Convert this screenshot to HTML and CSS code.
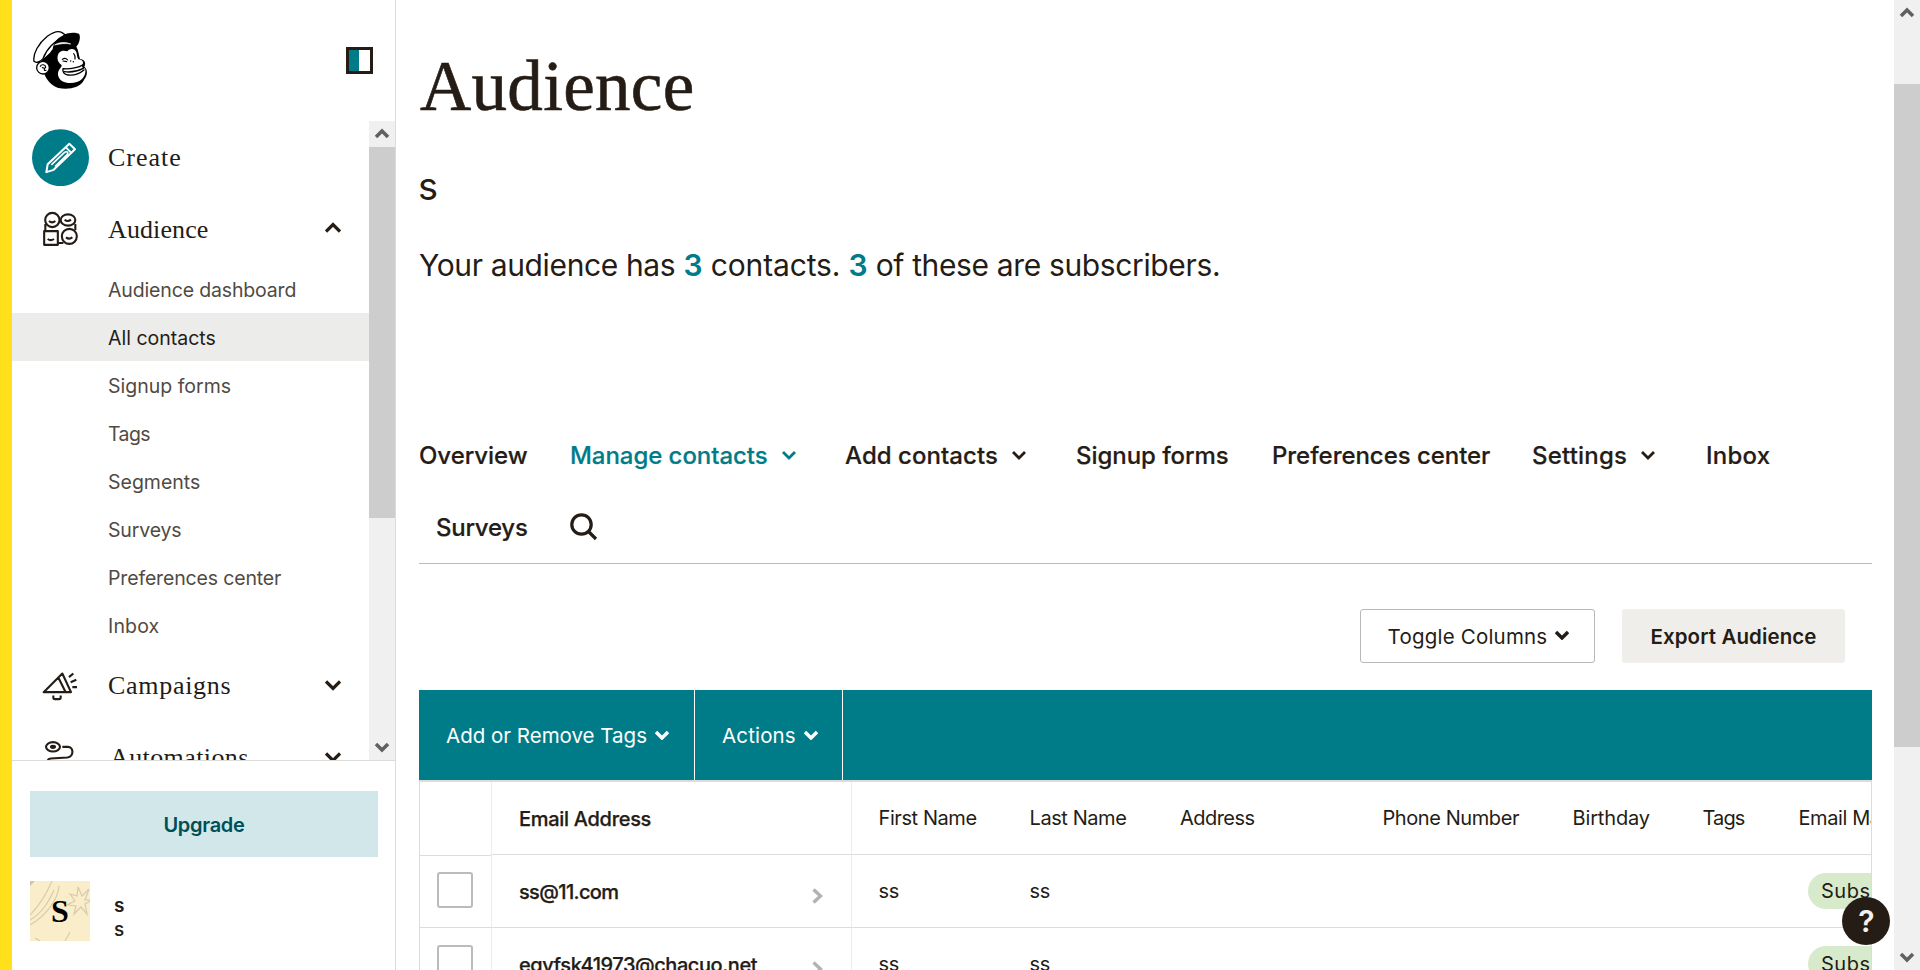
FILE: index.html
```html
<!DOCTYPE html>
<html lang="en">
<head>
<meta charset="utf-8">
<title>Audience</title>
<link rel="stylesheet" href="styles.css">
</head>
<body>
<div class="accent"></div>

<aside class="sidebar">
  <header class="brand">
    <svg class="logo" viewBox="96 90 168 180" role="img" aria-label="Mailchimp">
      <path d="M150 158C160 140 180 130 205 128L230 142C236 152 236 166 240 177C254 178 259 190 253 200C265 210 262 226 252 240C240 264 205 270 175 264C155 258 140 240 133 222L126 180Z" fill="#000"/>
      <path d="M173 168C176 152 190 150 202 154C210 143 226 145 229 157C232 166 231 174 235 178C245 179 252 184 248 193C244 199 246 205 254 205C260 214 254 230 245 238C232 251 205 252 190 245C175 238 170 222 177 210C181 203 187 199 184 194C175 189 171 178 173 168Z" fill="#fff"/>
      <path d="M190 206C212 208 238 202 249 194M189 206C187 216 192 224 204 225C222 227 240 220 252 210M193 215C212 218 232 214 250 205" fill="none" stroke="#000" stroke-width="4" stroke-linecap="round"/>
      <path d="M187 178C192 174 199 175 203 180M189 183L200 185M221 161C225 165 226 170 225 177" fill="none" stroke="#000" stroke-width="3.5" stroke-linecap="round"/>
      <circle cx="212" cy="183" r="2.200" fill="#000"/><circle cx="220" cy="185" r="2.200" fill="#000"/>
      <circle cx="129" cy="203" r="19" fill="#fff" stroke="#000" stroke-width="4"/>
      <path d="M121 199C124 192 136 193 137 201C137 205 132 204 133 209C133 212 136 212 138 211M127 203L132 204" fill="none" stroke="#000" stroke-width="3.5" stroke-linecap="round"/>
      <path d="M102 184C98 160 116 130 142 109C157 98 175 91 186 98L198 106C165 122 140 145 129 176C121 186 108 190 102 184Z" fill="#fff" stroke="#000" stroke-width="4"/>
      <path d="M186 108C200 97 230 96 238 103C243 115 236 136 226 143C212 137 184 137 158 148C160 130 172 114 186 108Z" fill="#000"/>
      <path d="M164 135C175 127 195 125 212 132C196 129 180 131 164 135Z" fill="#fff" stroke="#fff" stroke-width="2"/>
    </svg>
    <span class="collapse"></span>
  </header>

  <div class="nav-wrap">
    <nav class="nav">
      <a class="nav-main create">
        <svg class="nav-icon" viewBox="96 385.5 171 171">
          <circle cx="181.5" cy="471.5" r="85.5" fill="#007c89"/>
          <g fill="none" stroke="#fff" stroke-width="6" stroke-linejoin="round">
            <path d="M139 515L143 491L208 430L225 446L161 508Z"/>
            <path d="M197 440L214 457"/>
            <path d="M154 493L192 457Q200 451 203 456Q205 459 200 464L165 498" stroke-width="5"/>
          </g>
        </svg>
        <span class="label">Create</span>
      </a>
      <a class="nav-main audience">
        <svg class="nav-icon line" viewBox="96 603 171 171">
          <circle cx="157" cy="660" r="21.5"/>
          <ellipse cx="204" cy="660" rx="22" ry="17"/>
          <rect x="132.500" y="693.500" width="41" height="41"/>
          <circle cx="208" cy="709" r="22.500"/>
          <path d="M136 672V690M226 672V690M174 729H190M147 663Q156 671 166 663M194 659Q203 667 213 659M143 717Q152 724 162 717M198 712Q208 720 217 712"/>
        </svg>
        <span class="label">Audience</span>
        <svg class="caret up" viewBox="0 0 16 11"><path d="M1 9.500L8 2.500L15 9.500"/></svg>
      </a>
      <a class="nav-sub s1">Audience dashboard</a>
      <a class="nav-sub active">All contacts</a>
      <a class="nav-sub">Signup forms</a>
      <a class="nav-sub s4">Tags</a>
      <a class="nav-sub">Segments</a>
      <a class="nav-sub s1">Surveys</a>
      <a class="nav-sub s1">Preferences center</a>
      <a class="nav-sub s8">Inbox</a>
      <a class="nav-main campaigns">
        <svg class="nav-icon line" viewBox="96 469.5 171 171">
          <path d="M131 575L187 519L213 575ZM175 531L197 575M160 585V591Q160 596 165 596H177Q182 596 182 591V585M207 530L220 519M212 545L229 538M217 560H231"/>
        </svg>
        <span class="label">Campaigns</span>
        <svg class="caret" viewBox="0 0 16 11"><path d="M1 1.500L8 8.500L15 1.500"/></svg>
      </a>
      <a class="nav-main automations">
        <svg class="nav-icon line" viewBox="96 685.5 171 171">
          <ellipse cx="159" cy="739" rx="21" ry="14"/>
          <ellipse cx="159" cy="739" rx="6" ry="3"/>
          <path d="M187 739H204C221 739 223 768 202 771L152 774Q142 775 142 786"/>
        </svg>
        <span class="label">Automations</span>
        <svg class="caret" viewBox="0 0 16 11"><path d="M1 1.500L8 8.500L15 1.500"/></svg>
      </a>
    </nav>
    <div class="track">
      <svg class="arrow" viewBox="0 0 26 26"><path d="M7 16L13 10L19 16"/></svg>
      <div class="thumb nav-thumb"></div>
      <svg class="arrow end" viewBox="0 0 26 26"><path d="M7 10L13 16L19 10"/></svg>
    </div>
  </div>

  <footer class="account">
    <button class="upgrade">Upgrade</button>
    <div class="profile">
      <div class="avatar">
        <svg class="avatar-art" viewBox="0 0 60 60">
          <path d="M22 0C16 14 10 24 0 34M24 9C18 22 12 32 0 39M29 5C28 20 14 36 0 44M40 51L35 60M5 57L10 60M48 6L52 15L59 8L55 19H60M48 6L47 15L40 13L45 20L37 24L46 25L44 33L51 26L57 33L55 23L60 20"/>
          <path class="dot" d="M0 0H5L0 5Z"/>
        </svg>
        <span class="initial">S</span>
      </div>
      <div class="who"><span class="user">s</span><span>s</span></div>
    </div>
  </footer>
</aside>

<main class="main">
  <h1>Audience</h1>
  <h2>s</h2>
  <p class="lede"><span class="p1">Your audience has </span><b>3</b><span class="p2"> contacts. </span><b>3</b><span class="p3"> of these are subscribers.</span></p>

  <nav class="tabs">
    <a>Overview</a>
    <a class="on">Manage contacts<svg class="tick" viewBox="0 0 14 10"><path d="M1 2L7 8L13 2"/></svg></a>
    <a class="t3">Add contacts<svg class="tick" viewBox="0 0 14 10"><path d="M1 2L7 8L13 2"/></svg></a>
    <a>Signup forms</a>
    <a>Preferences center</a>
    <a class="t6">Settings<svg class="tick" viewBox="0 0 14 10"><path d="M1 2L7 8L13 2"/></svg></a>
    <a class="t7">Inbox</a>
    <a class="t8">Surveys</a>
    <a><svg class="search" viewBox="0 0 28 28"><circle cx="11.500" cy="11.500" r="9.700"/><path d="M18.500 18.500L26 26"/></svg></a>
  </nav>

  <div class="actions">
    <button class="toggle">Toggle Columns<svg class="tick" viewBox="0 0 14 10"><path d="M1 2L7 8L13 2"/></svg></button>
    <button class="export">Export Audience</button>
  </div>

  <div class="bulk">
    <a>Add or Remove Tags<svg class="tick" viewBox="0 0 14 10"><path d="M1 2L7 8L13 2"/></svg></a>
    <a class="b2">Actions<svg class="tick" viewBox="0 0 14 10"><path d="M1 2L7 8L13 2"/></svg></a>
  </div>

  <section class="table">
    <div class="row head">
      <div class="check"></div>
      <div class="email">Email Address</div>
      <div>First Name</div><div>Last Name</div><div class="h3">Address</div><div>Phone Number</div><div class="h5">Birthday</div><div class="h6">Tags</div><div class="h7">Email Marketing</div>
    </div>
    <div class="row">
      <div class="check"><span class="box"></span></div>
      <div class="email e1">ss@11.com<svg class="go" viewBox="0 0 11 16"><path d="M1.500 1.500L8.500 8L1.500 14.500"/></svg></div>
      <div>ss</div><div>ss</div><div></div><div></div><div></div><div></div><div class="status"><span class="pill">Subscribed</span></div>
    </div>
    <div class="row">
      <div class="check"><span class="box"></span></div>
      <div class="email e2">egvfsk41973@chacuo.net<svg class="go" viewBox="0 0 11 16"><path d="M1.500 1.500L8.500 8L1.500 14.500"/></svg></div>
      <div>ss</div><div>ss</div><div></div><div></div><div></div><div></div><div class="status"><span class="pill">Subscribed</span></div>
    </div>
  </section>
  <button class="help">?</button>
</main>

<div class="track page-track">
  <svg class="arrow" viewBox="0 0 26 26"><path d="M7 16L13 10L19 16"/></svg>
  <div class="thumb page-thumb"></div>
  <svg class="arrow end" viewBox="0 0 26 26"><path d="M7 10L13 16L19 10"/></svg>
</div>
</body>
</html>
```
FILE: styles.css
```css
* { box-sizing: border-box; }

body {
  margin: 0;
  height: 970px;
  display: flex;
  overflow: hidden;
  background: #fff;
  color: #241c15;
  font-family: Inter, "Liberation Sans", sans-serif;
}

button { border: 0; padding: 0; color: inherit; font-family: inherit; }
svg { flex: none; }

.accent { width: 12px; background: #ffe01b; }

/* Sidebar */
.sidebar {
  width: 384px;
  display: flex;
  flex-direction: column;
  border-right: 1px solid #dcdcdb;
}
.brand {
  height: 121px;
  padding: 30px 22px 0 20px;
  display: flex;
  justify-content: space-between;
}
.logo { width: 56px; height: 60px; }
.collapse {
  width: 27px;
  height: 27px;
  margin-top: 17px;
  border: 3px solid #241c15;
  background: linear-gradient(90deg, #007c89 10px, #fff 10px);
}
.nav-wrap { height: 639px; display: flex; overflow: hidden; }
.nav { flex: 1; }
.nav-main {
  height: 72px;
  padding: 0 28px 0 20px;
  display: flex;
  align-items: center;
  gap: 19px;
}
.nav-icon { width: 57px; height: 57px; }
.line {
  fill: none;
  stroke: #241c15;
  stroke-width: 6.3;
  stroke-linejoin: round;
}
.label {
  flex: 1;
  padding-top: 2px;
  font: 26px/72px "Liberation Serif", serif;
}
.create .label { letter-spacing: 1px; }
.audience .label { letter-spacing: .1px; }
.campaigns .label { letter-spacing: .7px; }
.automations .label { letter-spacing: .4px; padding-left: 2px; }
.caret { width: 16px; height: 11px; fill: none; stroke: #241c15; stroke-width: 3.2; }
.caret.up { margin-bottom: 3px; }
.nav-sub {
  display: block;
  height: 48px;
  padding-left: 96px;
  font-size: 19.5px;
  line-height: 51px;
  color: #504a44;
}
.nav-sub.active { background: #ececeb; color: #241c15; }
.nav-sub.s1 { letter-spacing: -.15px; }
.nav-sub.s4 { letter-spacing: -.6px; }
.nav-sub.s8 { letter-spacing: .15px; }

/* Scrollbars */
.track { width: 26px; background: #f0f0f0; display: flex; flex-direction: column; }
.arrow { width: 26px; height: 26px; fill: none; stroke: #606060; stroke-width: 3.5; }
.arrow.end { margin-top: auto; }
.thumb { background: #cdcdcd; }
.nav-thumb { height: 371px; }
.page-track { width: 26px; }
.page-thumb { height: 663px; margin-top: 58px; }

.account {
  flex: 1;
  padding: 30px 17px 0 18px;
  border-top: 1px solid #dcdcdb;
}
.upgrade {
  display: block;
  width: 348px;
  height: 66px;
  padding: 2px 0 0 0;
  background: #d1e7ea;
  color: #004e56;
  font-size: 20px;
  font-weight: 600;
  letter-spacing: -.3px;
}
.profile { display: flex; gap: 24px; margin-top: 24px; }
.avatar {
  position: relative;
  width: 60px;
  height: 60px;
  background: #faedca;
  display: flex;
  justify-content: center;
}
.avatar-art {
  position: absolute;
  inset: 0;
  fill: none;
  stroke: #d6ccab;
  stroke-width: 1.2;
}
.avatar-art .dot { fill: #cfc6a8; stroke: none; }
.initial {
  position: relative;
  font: bold 32px/60px "Liberation Serif", serif;
  color: #000;
}
.who {
  display: flex;
  flex-direction: column;
  padding-top: 13px;
  font-size: 19px;
  font-weight: 500;
  line-height: 24px;
}
.user { font-weight: 600; }

/* Main column */
.main {
  position: relative;
  flex: 1;
  min-width: 0;
  padding: 46px 22px 0 23px;
}
h1, h2, p { margin: 0; font-weight: 400; }
h1 {
  padding-left: 1px;
  font: 71px/80px "Liberation Serif", serif;
  letter-spacing: .3px;
  -webkit-text-stroke: .6px #241c15;
}
h2 { margin: 38px 0 0 -1px; font-size: 38px; line-height: 44px; }
.lede {
  margin-top: 37px;
  font-size: 30px;
  line-height: 40px;
  white-space: pre;
}
.lede b { font-weight: 600; color: #007c89; }
.p1, .p3 { letter-spacing: -.36px; }
.p2 { letter-spacing: -.15px; }

.tabs {
  display: grid;
  grid-template-columns: 151px 275px 231px 196px 260px 174px auto;
  grid-auto-rows: 72px;
  margin-top: 134px;
  border-bottom: 1px solid #bbb;
  height: 145px;
  font-size: 24px;
  font-weight: 500;
  letter-spacing: -.05px;
  -webkit-text-stroke: .2px currentColor;
}
.tabs a { display: flex; align-items: center; }
.tabs .on { color: #007c89; }
.tabs .t3 { letter-spacing: .05px; }
.tabs .t6 { letter-spacing: .2px; }
.tabs .t7 { letter-spacing: .25px; }
.tabs .t8 { padding-left: 17px; letter-spacing: -.25px; }
.tick { width: 14px; height: 10px; margin-left: 14px; fill: none; stroke: currentColor; stroke-width: 2.8; }
.search { width: 28px; height: 28px; fill: none; stroke: #241c15; stroke-width: 3.2; }

.actions { display: flex; justify-content: flex-end; gap: 27px; padding: 45px 27px 27px 0; }
.actions button {
  height: 54px;
  display: flex;
  align-items: center;
  justify-content: center;
  font-size: 20.5px;
  letter-spacing: .2px;
  border-radius: 3px;
}
.actions .toggle { width: 235px; padding-left: 2px; background: #fff; border: 1px solid #b9b8b6; }
.actions .tick { margin: -2px 0 0 8px; stroke-width: 3.4; }
.actions .export { width: 223px; background: #efeeea; font-weight: 600; letter-spacing: .1px; }

.bulk { display: flex; height: 90px; background: #007c89; color: #fff; font-size: 20.5px; }
.bulk a {
  display: flex;
  align-items: center;
  width: 276px;
  padding-left: 27px;
  padding-top: 1px;
  border-right: 1px solid #fff;
}
.bulk .b2 { width: 148px; letter-spacing: .15px; }
.bulk .tick { margin: -1px 0 0 8px; stroke-width: 3.4; }

.table {
  height: 190px;
  overflow: hidden;
  border: 1px solid #dcdcdb;
  border-width: 2px 1px 0;
  font-size: 20px;
  letter-spacing: -.42px;
}
.row {
  display: grid;
  grid-template-columns: 72px 360px 151px 150.5px 202.5px 190px 130px 96px 260px;
  grid-template-rows: 73px;
  height: 73px;
  white-space: nowrap;
}
.row > div { padding-left: 26.5px; border-bottom: 1px solid #dcdcdb; line-height: 72px; }
.row > .check { padding: 17px 0 0 17px; border-right: 1px solid #ececeb; line-height: 0; }
.head > .check { height: 74px; }
.row > .email {
  display: flex;
  align-items: center;
  justify-content: space-between;
  padding: 1px 28px 0 27px;
  border-right: 1px solid #ececeb;
  font-weight: 500;
  letter-spacing: -.3px;
  -webkit-text-stroke: .25px #241c15;
}
.row > .e1 { letter-spacing: -.65px; }
.row > .e2 { letter-spacing: -.44px; }
.row > .h3 { letter-spacing: -.55px; }
.row > .h5 { letter-spacing: -.15px; }
.row > .h6 { letter-spacing: -.9px; }
.row > .h7 { letter-spacing: -.4px; }
.box {
  display: block;
  width: 36px;
  height: 36px;
  border: 2px solid #bdbbb9;
  border-radius: 3px;
}
.go { width: 11px; height: 16px; margin-top: 8px; fill: none; stroke: #b5b3b1; stroke-width: 3.4; }
.row > .status { padding: 18px 0 0 36px; letter-spacing: .5px; }
.pill {
  display: block;
  width: 150px;
  height: 36px;
  padding-left: 13px;
  border-radius: 18px;
  background: #d8eacc;
  line-height: 37px;
}

.help {
  position: absolute;
  right: 4px;
  bottom: 25px;
  width: 48px;
  height: 48px;
  padding-left: 1px;
  border-radius: 50%;
  background: #241c15;
  color: #f3f1ee;
  font-size: 30px;
  font-weight: 600;
  line-height: 49px;
}
```
